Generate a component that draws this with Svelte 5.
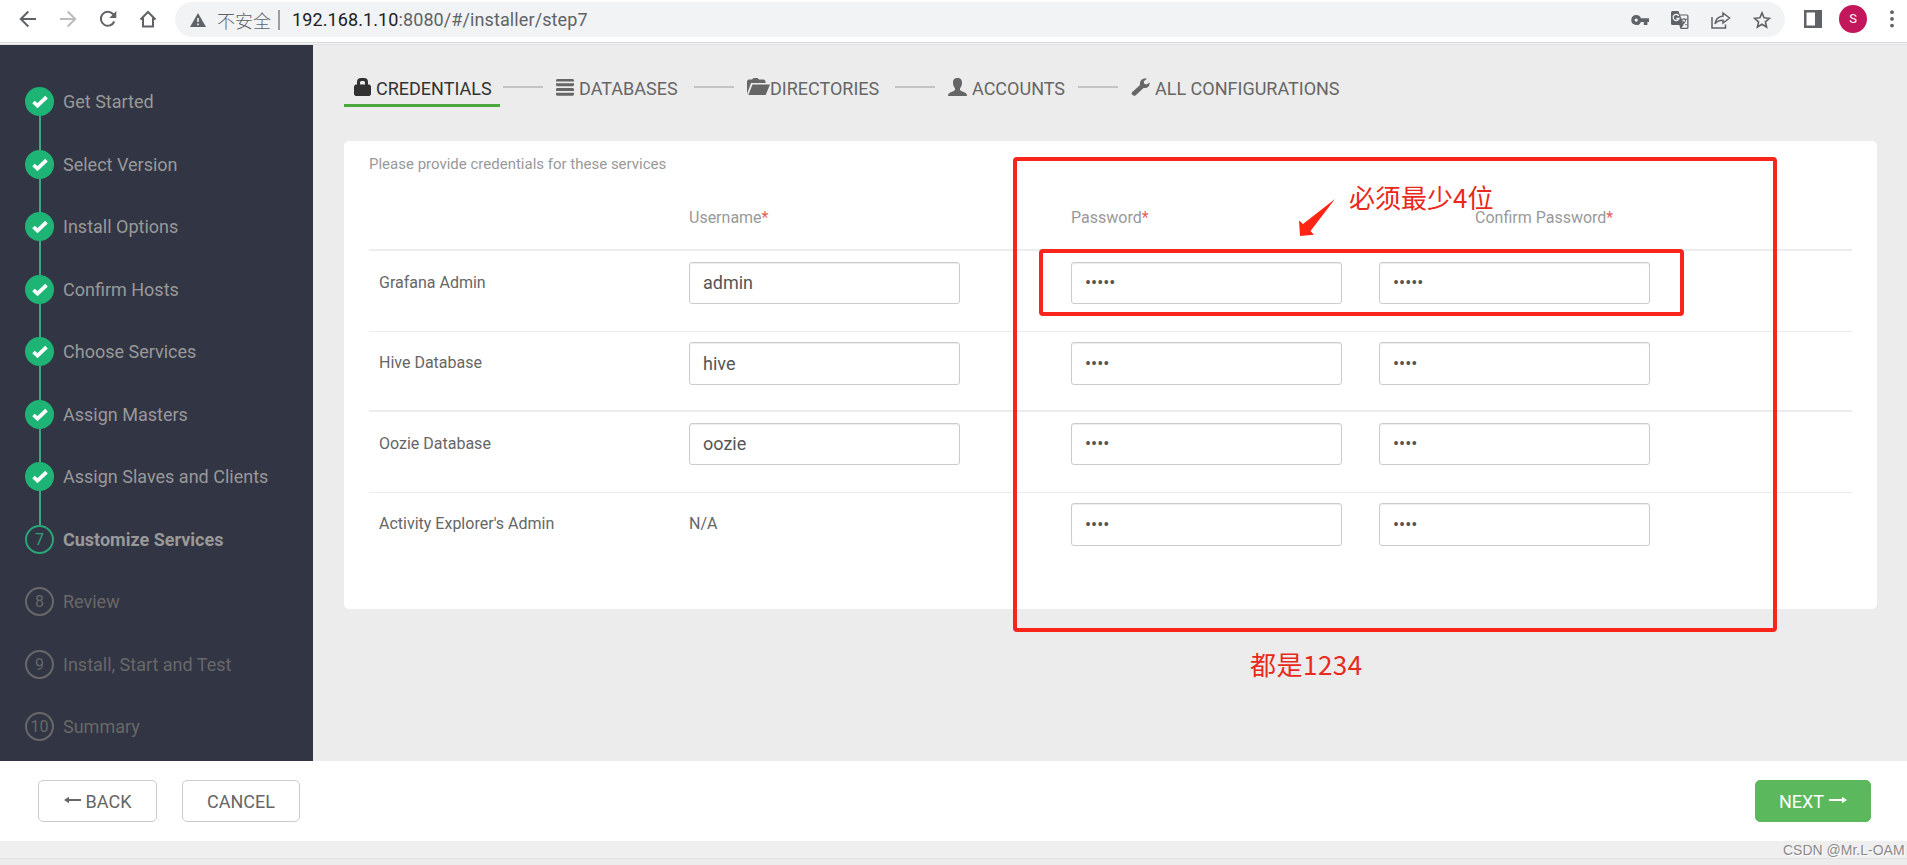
<script lang="ts">
  type Credential = {
    label: string;
    username?: string;
    password: string;
  };

  const steps = [
    'Get Started',
    'Select Version',
    'Install Options',
    'Confirm Hosts',
    'Choose Services',
    'Assign Masters',
    'Assign Slaves and Clients',
    'Customize Services',
    'Review',
    'Install, Start and Test',
    'Summary',
  ];
  // "Get Started" has no number of its own
  const current = 7;

  const tabs = [
    { icon: 'lock', label: 'CREDENTIALS' },
    { icon: 'database', label: 'DATABASES' },
    { icon: 'folder', label: 'DIRECTORIES' },
    { icon: 'user', label: 'ACCOUNTS' },
    { icon: 'wrench', label: 'ALL CONFIGURATIONS' },
  ];

  let credentials: Credential[] = $state([
    { label: 'Grafana Admin', username: 'admin', password: 'admin' },
    { label: 'Hive Database', username: 'hive', password: '1234' },
    { label: 'Oozie Database', username: 'oozie', password: '1234' },
    { label: "Activity Explorer's Admin", password: '1234' },
  ]);
</script>

<div class="page">
  <header class="toolbar">
    <div class="nav">
      <svg width="18" height="18" viewBox="0 0 18 18"><path d="M17 9H2M9.3 1.5 1.8 9l7.5 7.5" /></svg>
      <svg class="off" width="18" height="18" viewBox="0 0 18 18"><path d="M1 9h15M8.7 1.5 16.2 9l-7.500 7.500" /></svg>
      <svg width="18" height="18" viewBox="0 0 18 18"><path d="M15.300 11.500A7 7 0 1 1 14 4l1.500 1.600" /><path class="fill" d="M17.300 1v7h-7z" /></svg>
      <svg width="18" height="18" viewBox="0 0 18 18"><path d="M1.500 9.500 9 2l7.500 7.500M4 8v8.500h10V8" /></svg>
    </div>
    <div class="omnibox">
      <svg class="warn" width="16" height="14" viewBox="0 0 16 14"><path d="M8 0l8 14H0z" fill="#5f6368" /><path d="M8 5v4M8 10.500v1.700" stroke="#f1f3f4" stroke-width="1.600" /></svg>
      <span class="insecure">不安全</span>
      <span class="bar"></span>
      <span class="url"><b>192.168.1.10</b>:8080/#/installer/step7</span>
      <div class="actions">
        <svg width="18" height="18" viewBox="0 0 18 18"><path fill="#5f6368" fill-rule="evenodd" d="M5.200 4a5 5 0 0 1 4.700 3.300H18v3.600h-1.600V14h-3.600v-3.100H9.900A5 5 0 1 1 5.200 4zm0 3.400a1.700 1.700 0 1 0 0 3.400 1.700 1.700 0 0 0 0-3.400z" /></svg>
        <svg width="18" height="18" viewBox="0 0 18 18">
          <path d="M1.500 0h6l1.200 3.500H16a1.500 1.500 0 0 1 1.500 1.500v11.500A1.500 1.500 0 0 1 16 18H9.500L8.300 14H1.500A1.500 1.500 0 0 1 0 12.500v-11A1.500 1.500 0 0 1 1.500 0z" fill="#5f6368" />
          <path d="M9.200 4.600h7v12.200h-5.700l2-2.800z" fill="#f1f3f4" />
          <path d="M7.800 5A3 3 0 1 0 8 7.500H5.300" stroke="#f1f3f4" stroke-width="1.300" fill="none" />
          <path d="M10 8.300h6M13 7v1.300M15 8.500c-.5 2.500-2 4-4.200 5.300M11.200 9.500c1 1.800 2.500 3.400 4.500 4.500" stroke="#5f6368" stroke-width="1.100" fill="none" />
        </svg>
        <svg width="20" height="18" viewBox="0 0 20 18"><path fill="none" stroke="#5f6368" stroke-width="1.500" d="M1 6v11h13.500v-3.500M12 2l6.500 5L12 12V9.300c-3.500 0-6 .9-8 3.600.6-4.200 3.300-7.300 8-7.900z" /></svg>
        <svg width="18" height="18" viewBox="0 0 18 18"><path fill="none" stroke="#5f6368" stroke-width="1.600" d="m9 1.900 2.100 4.900 5.300.5-4 3.500 1.200 5.200L9 13.200 4.400 16l1.200-5.200-4-3.500 5.300-.5z" /></svg>
      </div>
    </div>
    <svg class="side-panel" width="18" height="18" viewBox="0 0 18 18"><path fill="#5f6368" fill-rule="evenodd" d="M0 0h18v18H0zM2.500 2.500v13h8.500v-13z" /></svg>
    <span class="avatar">S</span>
    <svg class="dots" width="4" height="18" viewBox="0 0 4 18"><circle cx="2" cy="2.200" r="1.900" /><circle cx="2" cy="8.900" r="1.900" /><circle cx="2" cy="15.600" r="1.900" /></svg>
  </header>

  <div class="body">
    <nav class="sidebar">
      {#each steps as step, i}
        <div class="step" class:done={i < current} class:current={i === current}>
          <span class="marker">
            {#if i < current}
              <svg width="16" height="13" viewBox="0 0 16 13"><path d="M1.500 7 5.500 10.700 14.500 2.200" fill="none" stroke="#fff" stroke-width="3.700" /></svg>
            {:else}
              {i}
            {/if}
          </span>
          <span>{step}</span>
        </div>
      {/each}
    </nav>

    <main>
      <div class="tabs">
        {#each tabs as tab, i}
          {#if i > 0}<span class="dash"></span>{/if}
          <div class="tab {tab.icon}" class:active={i === 0}>
            {#if tab.icon === 'lock'}
              <svg width="17" height="18" viewBox="0 0 17 18"><path fill-rule="evenodd" d="M3 6.500V4a4 4 0 0 1 4-4h3a4 4 0 0 1 4 4v2.500h1.500L17 8v8.500L15.500 18h-14L0 16.500V8l1.500-1.500zm3 0h5V4.200L10 3H7L6 4.200z" /></svg>
            {:else if tab.icon === 'database'}
              <svg width="18" height="18" viewBox="0 0 18 18"><path d="M1 1h16l1 1v1.500H0V2zM0 5.300h18v2l-1 .9H1l-1-.9zM1 10h16l1 .9v2H0v-2zM0 14.700h18v2l-1 1H1l-1-1z" /></svg>
            {:else if tab.icon === 'folder'}
              <svg width="23" height="18" viewBox="0 0 23 18"><path d="M0 16V3l1.500-1.500H5L6.500 0h4L12 1.500h5L18.500 3v2H4zM5.500 6.500H23L18.700 17H1.300z" /></svg>
            {:else if tab.icon === 'user'}
              <svg width="19" height="18" viewBox="0 0 19 18"><path d="M9.500 0C12.800 0 14 1.800 14 4.500c0 3-1 4.500-2 6v1.300c0 1 3.500 2 5.500 3.200 1 .6 1.500 1.500 1.500 3H0c0-1.500.5-2.400 1.500-3C3.500 13.800 7 12.800 7 11.800v-1.300c-1-1.500-2-3-2-6C5 1.800 6.200 0 9.500 0z" /></svg>
            {:else}
              <svg width="19" height="18" viewBox="0 0 19 18"><path d="M16 .7 12.800 3.300l.4 2.400 2.400.7 3-2c.5 3.600-2.500 6.300-6 5.500L4.500 17.500c-1.500 1.200-4.500-.8-3.700-2.900L9 7C8.200 2.500 11.700-.6 16 .7z" /></svg>
            {/if}
            <span>{tab.label}</span>
          </div>
        {/each}
      </div>

      <section class="panel">
        <p>Please provide credentials for these services</p>
        <div class="row head">
          <span></span>
          <span>Username<i>*</i></span>
          <span>Password<i>*</i></span>
          <span class="confirm">Confirm Password<i>*</i></span>
        </div>
        {#each credentials as cred}
          <div class="row">
            <span class="label">{cred.label}</span>
            {#if cred.username}
              <input type="text" bind:value={cred.username} />
            {:else}
              <span class="na">N/A</span>
            {/if}
            <input type="password" value={cred.password} />
            <input type="password" value={cred.password} />
          </div>
        {/each}
      </section>
    </main>
  </div>

  <footer>
    <button><svg width="17" height="8" viewBox="0 0 17 8"><path d="M0 4 5 .8v2.200h12v2H5v2.200z" /></svg><span>BACK</span></button>
    <button class="cancel">CANCEL</button>
    <button class="next"><span>NEXT</span><svg width="18" height="8" viewBox="0 0 18 8"><path d="M18 4 13 .8v2.200H0v2h13v2.200z" /></svg></button>
  </footer>
  <div class="bottom"></div>

  <div class="mark outer"></div>
  <div class="mark inner"></div>
  <svg class="arrow" width="38" height="40" viewBox="0 0 38 40"><path d="M37 1 5 26l-4-3.500L2 38l14-1.300-3.500-3.700z" fill="#ff2414" /></svg>
  <span class="note top">必须最少4位</span>
  <span class="note low">都是1234</span>
  <span class="watermark">CSDN @Mr.L-OAM</span>
</div>

<style>
  :global(body) {
    background: #ececec;
    overflow: hidden;
  }
  .page {
    position: relative;
    width: 1907px;
    height: 865px;
    overflow: hidden;
    font-family: Roboto, 'Noto Sans CJK SC', sans-serif;
    font-size: 18px;
    color: #666;
  }
  svg {
    display: block;
    flex-shrink: 0;
  }
  .toolbar {
    display: flex;
    align-items: flex-start;
    box-sizing: border-box;
    height: 45px;
    padding-top: 2px;
    background: linear-gradient(#fff 42px, #d8d9dc 42px, #d8d9dc 43px, #f5f5f5 43px, #f5f5f5 44px, #e2e2e2 44px);
  }
  .nav {
    display: flex;
    gap: 22px;
    width: 156px;
    padding: 8px 0 0 19px;
  }
  .nav path {
    fill: none;
    stroke: #5f6368;
    stroke-width: 2;
  }
  .nav .off path { stroke: #babcbe; }
  .nav .fill { fill: #5f6368; stroke: none; }
  .omnibox {
    display: flex;
    align-items: center;
    box-sizing: border-box;
    width: 1610px;
    height: 35px;
    padding-left: 15px;
    border-radius: 18px;
    background: #f1f3f4;
    color: #5f6368;
  }
  .insecure {
    margin-left: 11px;
    font-family: 'Noto Sans CJK SC', sans-serif;
    font-weight: 300;
    line-height: 30px;
  }
  .bar {
    width: 2px;
    height: 20px;
    margin: 0 12px 0 7px;
    background: #9a9da1;
  }
  .url { letter-spacing: 0.1px; }
  .url b { font-weight: 400; color: #202124; }
  .actions {
    display: flex;
    gap: 22px;
    margin: 0 14px 0 auto;
  }
  .side-panel { margin: 8px 0 0 19px; }
  .avatar {
    width: 28px;
    height: 28px;
    margin: 3px 0 0 17px;
    border-radius: 50%;
    background: #c2185b;
    color: #fff;
    font-size: 13px;
    line-height: 28px;
    text-align: center;
  }
  .dots { margin: 8px 0 0 23px; fill: #5f6368; }

  .body {
    display: flex;
    height: 716px;
  }
  .sidebar {
    box-sizing: border-box;
    width: 313px;
    padding: 42px 0 0 25px;
    background: #323544;
  }
  .step {
    position: relative;
    display: flex;
    align-items: center;
    gap: 9px;
    height: 29px;
    margin-bottom: 33.5px;
    color: #686868;
  }
  .marker {
    display: flex;
    align-items: center;
    justify-content: center;
    box-sizing: border-box;
    width: 29px;
    height: 29px;
    border: 2px solid #686868;
    border-radius: 50%;
    font-size: 16px;
  }
  .step.done { color: #999; }
  .done .marker { background: #1eb475; border-color: #1eb475; }
  .done::after {
    content: '';
    position: absolute;
    left: 14px;
    top: 29px;
    width: 2px;
    height: 34px;
    background: #3fa57f;
  }
  .current { color: #999; font-weight: 700; }
  .current .marker { color: #2aa576; border-color: #2aa576; font-weight: 400; }

  main {
    flex: 1;
    padding: 26px 30px 0 31px;
  }
  .tabs {
    display: flex;
    height: 36px;
  }
  .tab {
    display: flex;
    box-sizing: border-box;
    height: 36px;
    padding: 7px 0 0 10px;
    color: #666;
    fill: #666;
    white-space: nowrap;
  }
  .tab span { margin-left: 5px; line-height: 21px; }
  .tab.active {
    width: 156px;
    border-bottom: 3px solid #4ba83d;
    color: #323232;
    fill: #323232;
  }
  .folder span { margin-left: 0; }
  .database { width: 145px; }
  .folder { width: 155px; }
  .user { width: 137px; }
  .dash {
    width: 40px;
    height: 2px;
    margin: 15px 3px 0;
    background: #c4c4c4;
  }
  .panel {
    box-sizing: border-box;
    height: 468px;
    margin-top: 34px;
    padding: 14px 25px 0;
    border-radius: 5px;
    background: #fff;
  }
  .panel p {
    margin: 0;
    font-size: 15px;
    line-height: 18px;
    color: #999;
  }
  .row {
    display: grid;
    grid-template-columns: 320px 382px 308px 1fr;
    box-sizing: border-box;
    height: 80.500px;
    padding-top: 10.500px;
    border-bottom: 1px solid #ececec;
    font-size: 16px;
    line-height: 42px;
  }
  .row:nth-of-type(3) { border-width: 2px; }
  .row:last-child { border: none; }
  .row.head {
    height: 78px;
    padding-top: 24px;
    border-width: 2px;
    color: #999;
  }
  .head i { color: #e8605c; font-style: normal; }
  .confirm { padding-left: 96px; }
  .label { padding-left: 10px; }
  input {
    box-sizing: border-box;
    width: 271px;
    height: 42.500px;
    padding: 0 13px;
    border: 1px solid #ccc;
    border-radius: 3px;
    box-shadow: inset 0 1px 1px rgba(0, 0, 0, 0.08);
    outline: none;
    background: #fff;
    color: #555;
    font: 18px Roboto, sans-serif;
  }

  footer {
    display: flex;
    align-items: center;
    height: 80px;
    padding: 0 36px 0 38px;
    background: #fff;
  }
  button {
    display: flex;
    align-items: center;
    justify-content: center;
    gap: 5px;
    box-sizing: border-box;
    width: 119px;
    height: 42px;
    padding: 0;
    border: 1px solid #ccc;
    border-radius: 5px;
    background: #fff;
    color: #666;
    fill: #666;
    font: 18px Roboto, sans-serif;
  }
  button svg { margin-top: -3px; }
  .cancel { width: 118px; margin-left: 25px; }
  .next {
    width: 116px;
    margin-left: auto;
    border-color: #5cb85c;
    background: #5cb85c;
    color: #fff;
    fill: #fff;
  }
  .bottom {
    height: 17px;
    border-bottom: 1px solid #e2e2e2;
    background: #efefef;
  }

  .mark {
    position: absolute;
    box-sizing: border-box;
    border: 4px solid #f9251a;
    border-radius: 4px;
  }
  .outer { left: 1013px; top: 157px; width: 764px; height: 475px; }
  .inner { left: 1039px; top: 249px; width: 645px; height: 67px; }
  .arrow { position: absolute; left: 1298px; top: 198px; }
  .note {
    position: absolute;
    color: #e8291c;
    font: 26px/36px 'Noto Sans CJK SC', sans-serif;
    white-space: nowrap;
  }
  .note.top { left: 1349px; top: 179px; }
  .note.low { left: 1250px; top: 646px; letter-spacing: 0.500px; }
  .watermark {
    position: absolute;
    left: 1783px;
    top: 842px;
    color: #8a8a8a;
    font: 14px/16px 'Liberation Sans', sans-serif;
    text-shadow: 1px 1px 0 #fff;
    white-space: nowrap;
  }
</style>
